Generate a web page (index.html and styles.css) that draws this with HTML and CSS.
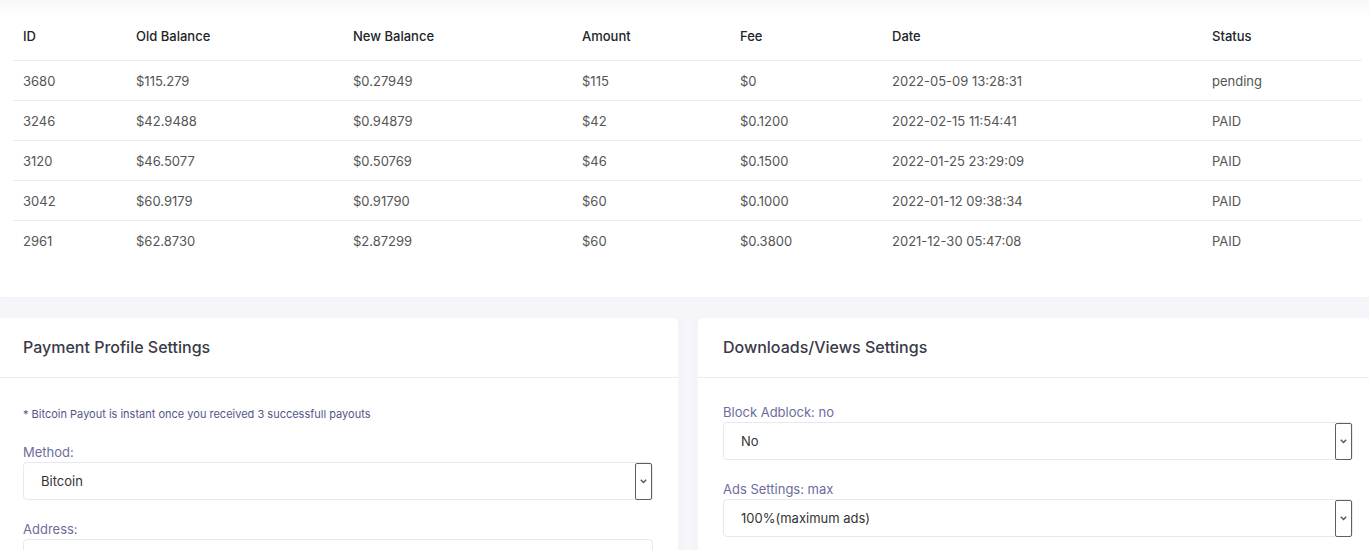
FILE: index.html
```html
<!DOCTYPE html>
<html lang="en">
<head>
  <meta charset="UTF-8">
  <meta name="viewport" content="width=device-width, initial-scale=1.0">
  <title>Withdrawals</title>
  <link rel="stylesheet" href="styles.css">
</head>
<body>
  <div class="page">
    <!-- Auszahlungen -->
    <div class="card card-table">
      <table class="payouts">
        <thead>
          <tr>
            <th class="c-id">ID</th>
            <th class="c-old">Old Balance</th>
            <th class="c-new">New Balance</th>
            <th class="c-amount">Amount</th>
            <th class="c-fee">Fee</th>
            <th class="c-date">Date</th>
            <th class="c-status">Status</th>
          </tr>
        </thead>
        <tbody>
          <tr><td>3680</td><td>$115.279</td><td>$0.27949</td><td>$115</td><td>$0</td><td>2022-05-09 13:28:31</td><td>pending</td></tr>
          <tr><td>3246</td><td>$42.9488</td><td>$0.94879</td><td>$42</td><td>$0.1200</td><td>2022-02-15 11:54:41</td><td>PAID</td></tr>
          <tr><td>3120</td><td>$46.5077</td><td>$0.50769</td><td>$46</td><td>$0.1500</td><td>2022-01-25 23:29:09</td><td>PAID</td></tr>
          <tr><td>3042</td><td>$60.9179</td><td>$0.91790</td><td>$60</td><td>$0.1000</td><td>2022-01-12 09:38:34</td><td>PAID</td></tr>
          <tr><td>2961</td><td>$62.8730</td><td>$2.87299</td><td>$60</td><td>$0.3800</td><td>2021-12-30 05:47:08</td><td>PAID</td></tr>
        </tbody>
      </table>
    </div>

    <div class="settings">
      <div class="card">
        <div class="card-header">Payment Profile Settings</div>
        <div class="card-body">
          <p class="note">* Bitcoin Payout is instant once you received 3 successfull payouts</p>
          <label class="label">Method:</label>
          <div class="select">
            <span>Bitcoin</span>
            <span class="arrow"><svg width="7" height="5" viewBox="0 0 7 5"><path d="M0.8 0.8 L3.5 3.6 L6.2 0.8" fill="none" stroke="#555" stroke-width="1.4"/></svg></span>
          </div>
          <label class="label">Address:</label>
          <div class="input"></div>
        </div>
      </div>

      <div class="card">
        <div class="card-header">Downloads/Views Settings</div>
        <div class="card-body">
          <label class="label">Block Adblock: no</label>
          <div class="select">
            <span>No</span>
            <span class="arrow"><svg width="7" height="5" viewBox="0 0 7 5"><path d="M0.8 0.8 L3.5 3.6 L6.2 0.8" fill="none" stroke="#555" stroke-width="1.4"/></svg></span>
          </div>
          <label class="label">Ads Settings: max</label>
          <div class="select">
            <span>100%(maximum ads)</span>
            <span class="arrow"><svg width="7" height="5" viewBox="0 0 7 5"><path d="M0.8 0.8 L3.5 3.6 L6.2 0.8" fill="none" stroke="#555" stroke-width="1.4"/></svg></span>
          </div>
        </div>
      </div>
    </div>
  </div>
</body>
</html>
```

FILE: styles.css
```css
body {
  margin: 0;
  background-color: #f6f6fa;
  font-family: Inter, "Open Sans", sans-serif;
  color: #555;
  overflow: hidden;
}

.page {
  width: 1380px;
  margin-left: -2px;
}

.card {
  background: #fff;
  border-radius: 5px;
  box-shadow: 0 0 8px rgba(60, 60, 110, 0.03);
}

.card-table {
  padding: 12px 16px 37px 15px;
  border-radius: 0 0 5px 5px;
  background: linear-gradient(#f7f7f7, #fff 18px);
}

.payouts {
  width: 100%;
  border-collapse: collapse;
  font-size: 13px;
  table-layout: fixed;
}

.payouts th {
  height: 48px;
  text-align: left;
  font-weight: 500;
  color: #212529;
  padding: 0 0 0 10px;
  border-bottom: 1px solid #ebebf2;
}

.payouts td {
  height: 39px;
  padding: 0 0 0 10px;
  color: #555;
  border-bottom: 1px solid #ebebf2;
}

.payouts tbody tr:last-child td {
  border-bottom: none;
}

.c-id { width: 103px; }
.c-old { width: 207px; }
.c-new { width: 219px; }
.c-amount { width: 148px; }
.c-fee { width: 142px; }
.c-date { width: 310px; }

.settings {
  display: grid;
  grid-template-columns: 1fr 1fr;
  gap: 20px;
  margin-top: 21px;
}

.card-header {
  height: 59px;
  line-height: 59px;
  padding: 0 25px;
  font-size: 16px;
  font-weight: 500;
  color: #3a3a48;
  border-bottom: 1px solid #ebebf0;
}

.card-body {
  padding: 24px 25px 20px 25px;
}

.note {
  margin: 2px 0 18px 0;
  font-size: 11px;
  line-height: 20px;
  color: #55558a;
}

.label {
  display: block;
  font-size: 13px;
  line-height: 20px;
  color: #6c6c9e;
}

.select {
  display: flex;
  align-items: center;
  justify-content: space-between;
  height: 36px;
  margin-bottom: 19px;
  padding-left: 17px;
  border: 1px solid #e8e8ef;
  border-radius: 4px;
  font-size: 13px;
  color: #333;
}

.arrow {
  display: flex;
  align-items: center;
  justify-content: center;
  width: 15px;
  height: 35px;
  border: 1px solid #5f5f5f;
  border-radius: 2px;
}

.input {
  height: 36px;
  border: 1px solid #e8e8ef;
  border-radius: 4px;
}
```
